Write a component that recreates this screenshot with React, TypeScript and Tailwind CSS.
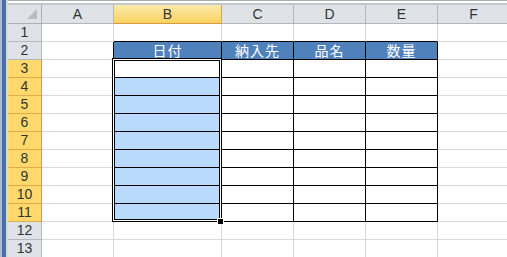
const COLS = [
  { label: "A", w: 72 },
  { label: "B", w: 108 },
  { label: "C", w: 72 },
  { label: "D", w: 72 },
  { label: "E", w: 72 },
  { label: "F", w: 72 },
];

const ROWS = Array.from({ length: 13 }, (_, i) => i + 1);

const headerTexts: Record<number, string> = { 1: "日付", 2: "納入先", 3: "品名", 4: "数量" };

function isSelectedRow(r: number) {
  return r >= 3 && r <= 11;
}

function inTable(r: number, c: number) {
  return r >= 2 && r <= 11 && c >= 1 && c <= 4;
}

function DataCell({ r, c }: { r: number; c: number }) {
  const table = inTable(r, c);
  const rightBlack = table || (c === 0 && r >= 2 && r <= 11);
  const bottomBlack = table || (r === 1 && c >= 1 && c <= 4);
  const isHead = r === 2 && table;
  const isSel = c === 1 && r >= 4 && r <= 11;

  return (
    <div
      className={[
        "border-r border-b flex items-center justify-center",
        rightBlack ? "border-r-black" : "border-r-[#d9d9d9]",
        bottomBlack ? "border-b-black" : "border-b-[#d9d9d9]",
        isHead ? "bg-[#4f81bd] text-white text-[14px]" : "",
        isSel ? "bg-[#b9dafd]" : "",
        isHead && c === 1 ? "shadow-[inset_0_-1px_0_#c98a3a]" : "",
      ].join(" ")}
    >
      {isHead ? <span className="leading-none pt-[1px] tracking-[1px]">{headerTexts[c]}</span> : null}
    </div>
  );
}

export default function App() {
  return (
    <div
      className="relative w-[507px] h-[257px] overflow-hidden bg-white flex text-[#333]"
      style={{ fontFamily: '"Liberation Sans", "Noto Sans CJK JP", sans-serif' }}
    >
      {/* left window edge */}
      <div className="flex w-[8px] shrink-0">
        <div className="w-[2px] bg-[#a9bdd6]" />
        <div className="w-[4px] bg-[#4a6ea4]" />
        <div className="w-[2px] bg-[#d3dae3]" />
      </div>

      <div className="flex flex-col flex-1 min-w-0">
        {/* formula bar edge */}
        <div className="flex flex-col shrink-0">
          <div className="h-[1px] bg-[#a9abae]" />
          <div className="h-[2px] bg-white" />
          <div className="h-[2px] bg-[#c3c7cc]" />
        </div>

        <div className="grid grid-cols-[34px_72px_108px_72px_72px_72px_72px] grid-rows-[19px_repeat(13,18px)]">
          {/* corner */}
          <div className="relative bg-[#dfe3e8] border-r border-b border-[#aab0b8]">
            <svg className="absolute right-[4px] bottom-[4px]" width="10" height="10" viewBox="0 0 10 10">
              <polygon points="10,0 10,10 0,10" fill="#b9bec4" />
            </svg>
          </div>
          {COLS.map((col) =>
            col.label === "B" ? (
              <div
                key={col.label}
                className="flex items-center justify-center text-[14px] bg-linear-to-b from-[#fdeaa8] to-[#f9d25f] border-r border-b border-r-[#e0a548] border-b-[#d99a3d]"
              >
                {col.label}
              </div>
            ) : (
              <div
                key={col.label}
                className="flex items-center justify-center text-[14px] bg-[#dfe3e8] border-r border-b border-[#b3b8bf]"
              >
                {col.label}
              </div>
            )
          )}

          {ROWS.map((r) => (
            <div key={r} className="contents">
              <div
                className={
                  isSelectedRow(r)
                    ? "flex items-center justify-center text-[14px] bg-[#ffd96b] border-r border-b border-r-[#d99a3d] border-b-[#e2aa4c]"
                    : "flex items-center justify-center text-[14px] bg-[#dfe3e8] border-r border-b border-[#b3b8bf]"
                }
              >
                {r}
              </div>
              {COLS.map((col, c) => (
                <DataCell key={col.label} r={r} c={c} />
              ))}
            </div>
          ))}
        </div>
      </div>

      {/* selection B3:B11 */}
      <div className="absolute left-[112px] top-[58px] w-[110px] h-[164px] border border-black">
        <div className="w-full h-full border border-white">
          <div className="w-full h-full border border-black" />
        </div>
      </div>
      {/* fill handle */}
      <div className="absolute left-[217px] top-[218px] w-[7px] h-[7px] bg-black border border-white" />
    </div>
  );
}
